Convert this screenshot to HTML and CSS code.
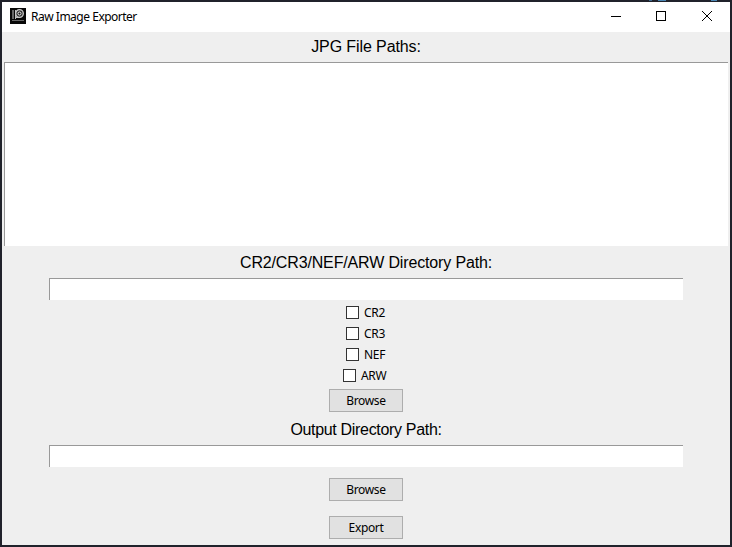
FILE: index.html
```html
<!DOCTYPE html>
<html lang="en">
<head>
<meta charset="utf-8">
<title>Raw Image Exporter</title>
<link rel="stylesheet" href="styles.css">
</head>
<body>
<main class="window">
  <header class="titlebar">
    <svg class="app-icon" viewBox="0 0 16 16">
      <path fill="#080808" d="M0 0h16v16H0z"/>
      <path fill="#666" d="M2 2h2v9H2zM2 12h12v1H2z"/>
      <path fill="none" stroke="#bbb" d="M5.5 2v9M6 9.5h4"/>
      <circle cx="9.5" cy="5.5" r="3.8" fill="#333" stroke="#ccc" stroke-width="1.3"/>
      <circle cx="9.5" cy="5.5" r="1.5" fill="#111" stroke="#eee"/>
    </svg>
    <span class="title">Raw Image Exporter</span>
    <nav class="controls">
      <svg viewBox="0 0 46 30"><path d="M15 14.5h10"/></svg>
      <svg viewBox="0 0 46 30"><path d="M14.5 9.5h9v9h-9z"/></svg>
      <svg viewBox="0 0 46 30"><path d="M14 9l10 10M24 9L14 19" shape-rendering="auto"/></svg>
    </nav>
  </header>
  <h2 class="heading paths">JPG File Paths:</h2>
  <div class="field list"></div>
  <h2 class="heading source">CR2/CR3/NEF/ARW Directory Path:</h2>
  <div class="field entry"></div>
  <section class="formats">
    <label class="option"><span class="box"></span><span class="name cr">CR2</span></label>
    <label class="option"><span class="box"></span><span class="name cr">CR3</span></label>
    <label class="option"><span class="box"></span><span class="name nef">NEF</span></label>
    <label class="option"><span class="box"></span><span class="name arw">ARW</span></label>
  </section>
  <button class="button">Browse</button>
  <h2 class="heading output">Output Directory Path:</h2>
  <div class="field entry"></div>
  <button class="button browse-output">Browse</button>
  <button class="button export">Export</button>
</main>
</body>
</html>
```
FILE: styles.css
```css
* { box-sizing: border-box; }
body {
  margin: 0;
  padding: 2px;
  height: 547px;
  background:
    linear-gradient(#4a86b4, #4a86b4) 658px 0 / 8px 1px no-repeat,
    linear-gradient(#4a86b4, #4a86b4) 711px 0 / 6px 1px no-repeat,
    linear-gradient(#3d6a90, #3d6a90) 649px 0 / 3px 1px no-repeat,
    #20222b;
  font-family: "Noto Sans", "Open Sans", sans-serif;
  font-size: 12px;
  color: #000;
  overflow: hidden;
}
.window {
  display: flex;
  flex-direction: column;
  align-items: center;
  width: 728px;
  height: 543px;
  background: #efefef;
}
.titlebar {
  display: flex;
  align-items: center;
  width: 100%;
  height: 30px;
  flex: none;
  padding-left: 8px;
  background: #fff;
}
.app-icon { width: 16px; height: 16px; margin-top: -2px; }
.title {
  margin-left: 5px;
  padding-bottom: 1px;
  letter-spacing: -0.52px;
  word-spacing: 0.2px;
  white-space: nowrap;
}
.controls { display: flex; margin-left: auto; margin-right: -4px; }
.controls svg {
  width: 46px;
  height: 30px;
  fill: none;
  stroke: #000;
  shape-rendering: crispEdges;
}
.heading {
  flex: none;
  margin: 0;
  font: 16px/30px "Liberation Sans", Arial, sans-serif;
  white-space: nowrap;
}
.paths { letter-spacing: -0.1px; }
.source { height: 32px; line-height: 33px; letter-spacing: -0.15px; }
.output { height: 33px; line-height: 35px; letter-spacing: -0.32px; }
.field {
  flex: none;
  background: #fff;
  border-top: 1px solid #999;
  border-left: 1px solid #999;
}
.list { width: 724px; height: 184px; }
.entry { width: 634px; height: 22px; }
.formats { padding-top: 2px; height: 89px; flex: none; }
.option {
  display: flex;
  align-items: center;
  justify-content: center;
  height: 21px;
}
.box { width: 13px; height: 13px; background: #fff; border: 1px solid #333; }
.name { margin-left: 5px; line-height: 20px; letter-spacing: -0.3px; }
.cr, .nef { width: 22px; }
.arw { width: 28px; }
.button {
  flex: none;
  width: 74px;
  height: 23px;
  padding: 0;
  background: #e1e1e1;
  border: 1px solid #adadad;
  font: inherit;
  line-height: 21px;
  letter-spacing: -0.35px;
  color: inherit;
}
.browse-output { margin-top: 11px; }
.export { margin-top: 15px; }
```
